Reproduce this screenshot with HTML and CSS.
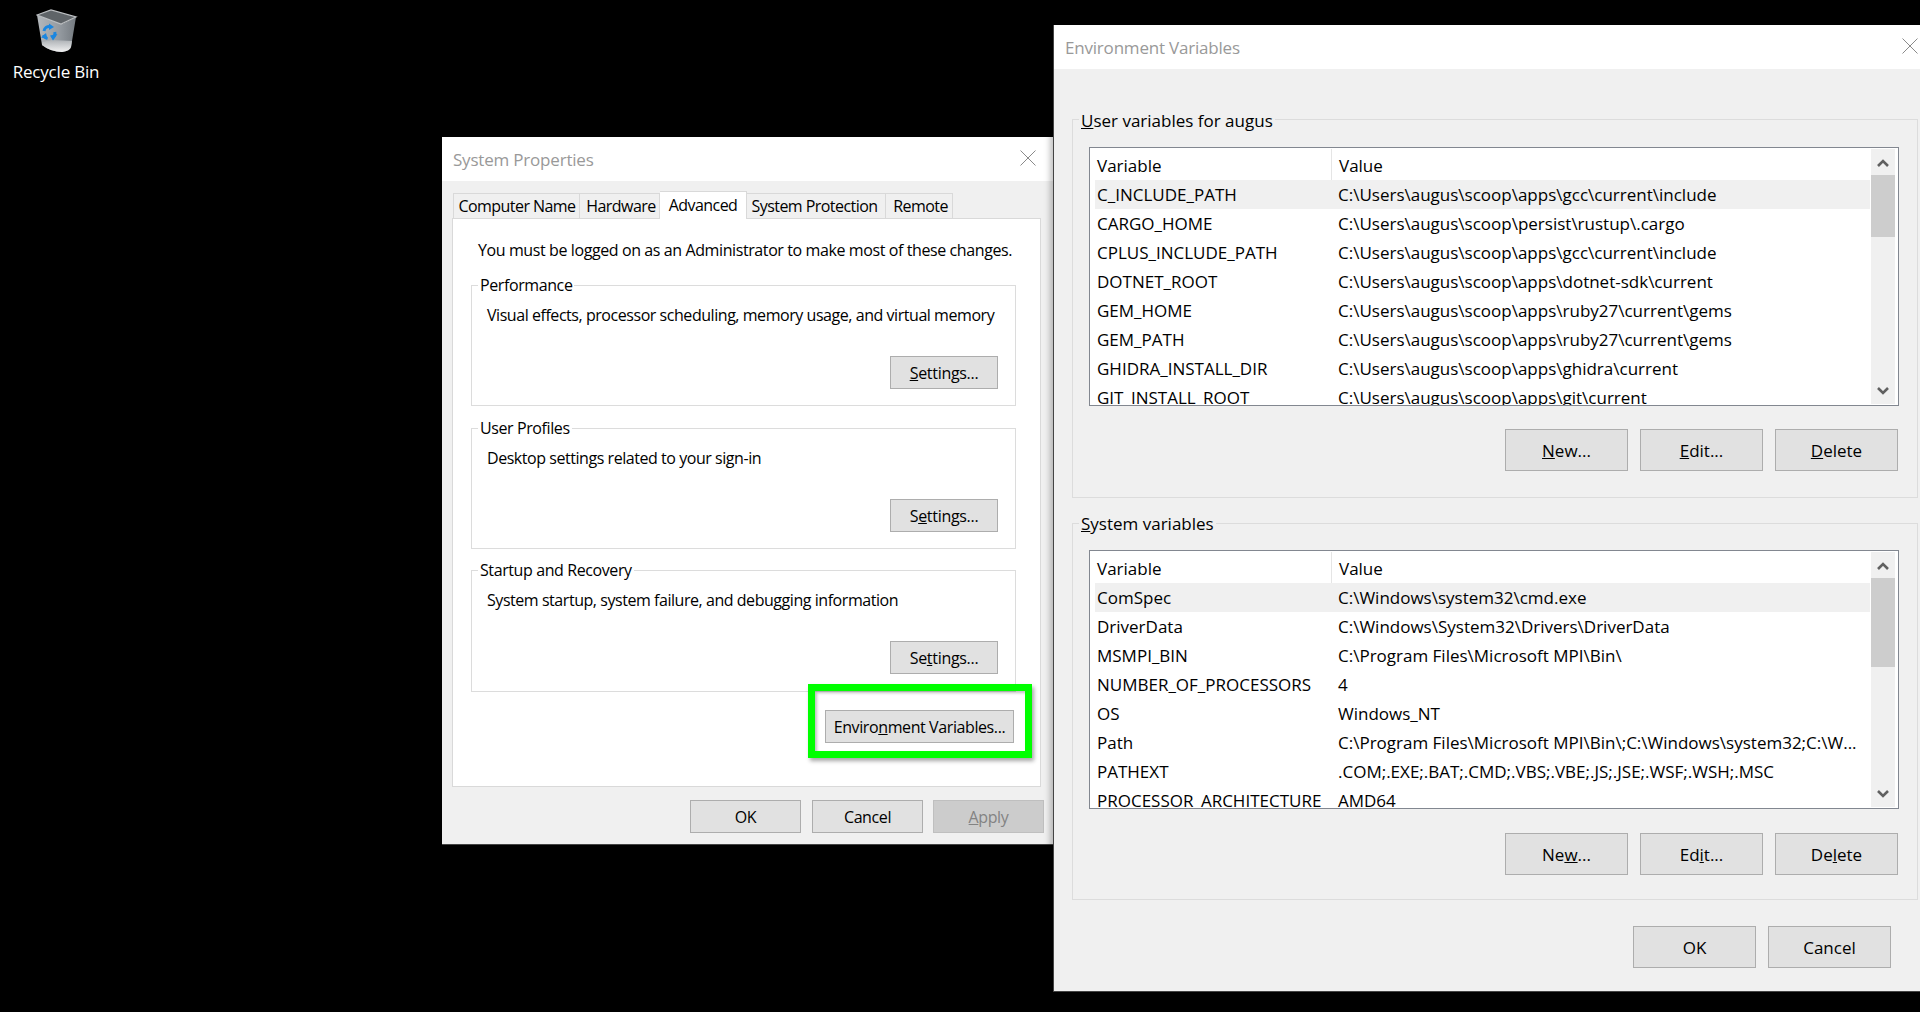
FILE: index.html
```html
<!DOCTYPE html>
<html lang="en">
<head>
<meta charset="utf-8">
<title>Environment Variables</title>
<link rel="stylesheet" href="styles.css">
</head>
<body>
<main class="desktop">
  <div class="desk-icon">
    <svg class="bin" viewBox="0 0 44 48" width="44" height="48">
      <defs>
        <linearGradient id="binBody" x1="0" y1="0" x2="1" y2="0"><stop offset="0" stop-color="#b4b8bc"/><stop offset="0.55" stop-color="#969ca2"/><stop offset="1" stop-color="#747a80"/></linearGradient>
        <linearGradient id="binFloor" x1="0" y1="0" x2="0" y2="1"><stop offset="0" stop-color="#aeb2b6"/><stop offset="1" stop-color="#f2f2f2"/></linearGradient>
      </defs>
      <path d="M1 7 L6 37 Q15 44 26 44 Q34 43 35 39 L40 9 L26 16 Z" fill="url(#binBody)"/>
      <path d="M6 34 L16 32 L36 33 L35 39 Q34 43 26 44 Q15 44 6 37 Z" fill="url(#binFloor)"/>
      <path d="M1 7 L15 2 L40 9 L25 16 Z" fill="#5f6468" stroke="#bcbfc2" stroke-width="1.2"/>
      <g fill="none" stroke="#1a86e0" stroke-width="3">
        <path d="M8 23 A5.5 5.5 0 0 1 14 18.5"/>
        <path d="M18.8 24 A5.5 5.5 0 0 1 16 30"/>
        <path d="M11.5 30.5 A5.5 5.5 0 0 1 7.5 27"/>
      </g>
      <g fill="#1a86e0">
        <path d="M13 15.5 L18 19 L13 22 Z"/>
        <path d="M21.5 26 L17 32.5 L14 27.5 Z"/>
        <path d="M5 29.5 L10 25 L11.5 31 Z"/>
      </g>
    </svg>
    <span class="desk-label">Recycle Bin</span>
  </div>

  <section class="window sysprops">
    <header class="titlebar">
      <span class="title">System Properties</span>
      <svg class="close" viewBox="0 0 16 16" width="16" height="16"><path d="M0.5 0.5 L15.5 15.5 M15.5 0.5 L0.5 15.5"/></svg>
    </header>
    <div class="tabs">
      <span class="tab t1">Computer Name</span>
      <span class="tab t2">Hardware</span>
      <span class="tab t3 active">Advanced</span>
      <span class="tab t4">System Protection</span>
      <span class="tab t5">Remote</span>
    </div>
    <div class="panel">
      <p class="note">You must be logged on as an Administrator to make most of these changes.</p>
      <fieldset class="sgroup">
        <legend>Performance</legend>
        <p>Visual effects, processor scheduling, memory usage, and virtual memory</p>
        <button class="btn settings" type="button"><u>S</u>ettings...</button>
      </fieldset>
      <fieldset class="sgroup profiles">
        <legend>User Profiles</legend>
        <p>Desktop settings related to your sign-in</p>
        <button class="btn settings" type="button">S<u>e</u>ttings...</button>
      </fieldset>
      <fieldset class="sgroup recovery">
        <legend>Startup and Recovery</legend>
        <p>System startup, system failure, and debugging information</p>
        <button class="btn settings" type="button">Se<u>t</u>tings...</button>
      </fieldset>
      <div class="env-wrap">
        <button class="btn env-btn" type="button">Enviro<u>n</u>ment Variables...</button>
        <div class="callout"></div>
      </div>
    </div>
    <footer class="sys-footer">
      <button class="btn sys-foot-btn" type="button">OK</button>
      <button class="btn sys-foot-btn" type="button">Cancel</button>
      <button class="btn sys-foot-btn disabled" type="button"><u>A</u>pply</button>
    </footer>
  </section>

  <section class="window envvars">
    <header class="titlebar">
      <span class="title">Environment Variables</span>
      <svg class="close" viewBox="0 0 16 16" width="16" height="16"><path d="M0.5 0.5 L15.5 15.5 M15.5 0.5 L0.5 15.5"/></svg>
    </header>
    <div class="env-body">
      <fieldset class="egroup user">
        <legend><u>U</u>ser variables for augus</legend>
        <div class="list">
          <div class="rows">
            <div class="row head"><span class="k">Variable</span><span class="v">Value</span></div>
            <div class="row sel"><span class="k">C_INCLUDE_PATH</span><span class="v">C:\Users\augus\scoop\apps\gcc\current\include</span></div>
            <div class="row"><span class="k">CARGO_HOME</span><span class="v">C:\Users\augus\scoop\persist\rustup\.cargo</span></div>
            <div class="row"><span class="k">CPLUS_INCLUDE_PATH</span><span class="v">C:\Users\augus\scoop\apps\gcc\current\include</span></div>
            <div class="row"><span class="k">DOTNET_ROOT</span><span class="v">C:\Users\augus\scoop\apps\dotnet-sdk\current</span></div>
            <div class="row"><span class="k">GEM_HOME</span><span class="v">C:\Users\augus\scoop\apps\ruby27\current\gems</span></div>
            <div class="row"><span class="k">GEM_PATH</span><span class="v">C:\Users\augus\scoop\apps\ruby27\current\gems</span></div>
            <div class="row"><span class="k">GHIDRA_INSTALL_DIR</span><span class="v">C:\Users\augus\scoop\apps\ghidra\current</span></div>
            <div class="row"><span class="k">GIT_INSTALL_ROOT</span><span class="v">C:\Users\augus\scoop\apps\git\current</span></div>
          </div>
          <div class="scroll">
            <svg class="arrow up" viewBox="0 0 12 8" width="12" height="8"><path d="M1 7 L6 2 L11 7"/></svg>
            <div class="track"><div class="thumb thumb-user"></div></div>
            <svg class="arrow down" viewBox="0 0 12 8" width="12" height="8"><path d="M1 1 L6 6 L11 1"/></svg>
          </div>
        </div>
        <div class="actions">
          <button class="btn act" type="button"><u>N</u>ew...</button>
          <button class="btn act" type="button"><u>E</u>dit...</button>
          <button class="btn act" type="button"><u>D</u>elete</button>
        </div>
      </fieldset>
      <fieldset class="egroup system">
        <legend><u>S</u>ystem variables</legend>
        <div class="list">
          <div class="rows">
            <div class="row head"><span class="k">Variable</span><span class="v">Value</span></div>
            <div class="row sel"><span class="k">ComSpec</span><span class="v">C:\Windows\system32\cmd.exe</span></div>
            <div class="row"><span class="k">DriverData</span><span class="v">C:\Windows\System32\Drivers\DriverData</span></div>
            <div class="row"><span class="k">MSMPI_BIN</span><span class="v">C:\Program Files\Microsoft MPI\Bin\</span></div>
            <div class="row"><span class="k">NUMBER_OF_PROCESSORS</span><span class="v">4</span></div>
            <div class="row"><span class="k">OS</span><span class="v">Windows_NT</span></div>
            <div class="row"><span class="k">Path</span><span class="v">C:\Program Files\Microsoft MPI\Bin\;C:\Windows\system32;C:\W...</span></div>
            <div class="row"><span class="k">PATHEXT</span><span class="v">.COM;.EXE;.BAT;.CMD;.VBS;.VBE;.JS;.JSE;.WSF;.WSH;.MSC</span></div>
            <div class="row"><span class="k">PROCESSOR_ARCHITECTURE</span><span class="v">AMD64</span></div>
          </div>
          <div class="scroll">
            <svg class="arrow up" viewBox="0 0 12 8" width="12" height="8"><path d="M1 7 L6 2 L11 7"/></svg>
            <div class="track"><div class="thumb thumb-system"></div></div>
            <svg class="arrow down" viewBox="0 0 12 8" width="12" height="8"><path d="M1 1 L6 6 L11 1"/></svg>
          </div>
        </div>
        <div class="actions">
          <button class="btn act" type="button">Ne<u>w</u>...</button>
          <button class="btn act" type="button">Ed<u>i</u>t...</button>
          <button class="btn act" type="button">De<u>l</u>ete</button>
        </div>
      </fieldset>
      <div class="env-footer">
        <button class="btn act" type="button">OK</button>
        <button class="btn act" type="button">Cancel</button>
      </div>
    </div>
  </section>
</main>
</body>
</html>
```
FILE: styles.css
```css
* { box-sizing: border-box; }
html, body { margin: 0; height: 100%; background: #000; }
body { overflow: hidden; font-family: "Open Sans", "Noto Sans", sans-serif; color: #000; }
.desktop { position: relative; width: 1920px; height: 1012px; overflow: hidden; background: #000; }

.desk-icon { position: absolute; left: 0; top: 8px; width: 112px; display: flex; flex-direction: column; align-items: center; }
.bin { margin-left: 3px; }
.desk-label { color: #fff; font-size: 17px; line-height: 22px; margin-top: 5px; letter-spacing: -0.2px; text-shadow: 1px 1px 1px rgba(0,0,0,.8); }

.window { position: absolute; background: #f0f0f0; display: flex; flex-direction: column; }
.sysprops { left: 442px; top: 137px; width: 612px; height: 708px; border-bottom: 1px solid #444; font-size: 16px; letter-spacing: -0.4px; }
.envvars { left: 1053px; top: 25px; width: 867px; height: 967px; border-left: 1px solid #444; border-bottom: 1px solid #444; box-shadow: -3px 0 6px rgba(0,0,0,.25); font-size: 17px; letter-spacing: 0; }

.titlebar { height: 44px; flex: none; background: #fff; display: flex; align-items: center; justify-content: space-between; }
.title { color: #999; font-size: 17px; letter-spacing: -0.2px; }
.sysprops .title { margin-left: 11px; }
.sysprops .close { margin-right: 18px; margin-top: -2px; }
.envvars .title { margin-left: 11px; }
.envvars .close { margin-right: 2px; margin-top: -2px; }
.close path { stroke: #8a8a8a; stroke-width: 1; fill: none; }

.tabs { display: flex; align-items: flex-end; height: 38px; padding-left: 11px; position: relative; z-index: 1; margin-bottom: -1px; letter-spacing: -0.55px; }
.tab { height: 26px; line-height: 25px; text-align: center; background: #f0f0f0; border: 1px solid #d9d9d9; border-left-width: 0; white-space: nowrap; }
.tab.t1 { width: 127px; border-left-width: 1px; padding-left: 1px; }
.tab.t2 { width: 80px; padding-left: 3px; }
.tab.t3 { width: 87px; }
.tab.t4 { width: 139px; padding-right: 3px; }
.tab.t5 { width: 67px; padding-left: 3px; }
.tab.active { height: 28px; line-height: 26px; background: #fff; border-bottom: 0; }

.panel { height: 569px; margin: 0 13px 0 10px; background: #fff; border: 1px solid #d9d9d9; padding: 21px 24px 0 18px; display: flex; flex-direction: column; align-items: stretch; }
.note { margin: 0 0 15px 7px; line-height: 20px; white-space: nowrap; }
.sgroup { margin: 0 0 12px; padding: 10px 17px 0 15px; height: 131px; border: 1px solid #dcdcdc; min-width: 0; display: flex; flex-direction: column; }
.sgroup.profiles { margin-bottom: 11px; }
.sgroup.recovery { height: 132px; }
.sgroup legend { padding: 0 2px; margin-left: -9px; line-height: 20px; height: 20px; }
.sgroup p { margin: 0; line-height: 20px; white-space: nowrap; letter-spacing: -0.45px; }

.btn { display: block; margin: 0; padding: 0; font: inherit; letter-spacing: inherit; color: #000; background: #e1e1e1; border: 1px solid #adadad; text-align: center; white-space: nowrap; }
.settings { align-self: flex-end; width: 108px; height: 33px; margin-top: 31px; letter-spacing: -0.3px; }

.env-wrap { position: relative; align-self: flex-end; margin: 6px 2px 0 0; width: 189px; height: 33px; }
.env-btn { width: 100%; height: 100%; }
.callout { position: absolute; left: -17px; top: -26px; width: 224px; height: 74px; border: 7px solid #00ff00; box-shadow: 2px 3px 4px rgba(0,0,0,.35), inset 2px 2px 3px rgba(0,0,0,.25); pointer-events: none; }

.sys-footer { display: flex; justify-content: flex-end; padding: 13px 10px 0 0; gap: 10px; }
.sys-foot-btn { width: 111px; height: 33px; }
.sys-foot-btn:first-child { margin-right: 1px; }
.sys-foot-btn.disabled { background: #ccc; border-color: #bfbfbf; color: #838383; }

.env-body { padding: 38px 0 0 18px; display: flex; flex-direction: column; }
.egroup { margin: 0; width: 846px; min-width: 0; padding: 16px 18px 0 16px; border: 1px solid #dcdcdc; }
.egroup.user { height: 391px; margin-bottom: 13px; }
.egroup.system { height: 389px; padding-top: 15px; }
.egroup legend { margin-left: -10px; padding: 0 2px; height: 24px; line-height: 27px; }
.egroup.system legend { line-height: 25px; }

.list { height: 259px; border: 1px solid #828790; background: #fff; display: flex; overflow: hidden; padding-left: 5px; }
.rows { flex: 1; min-width: 0; }
.row { display: flex; height: 29px; line-height: 30px; white-space: nowrap; }
.row.head { height: 32px; line-height: 35px; }
.row.sel { background: #f0f0f0; }
.k { width: 236px; padding-left: 2px; flex: none; overflow: hidden; }
.v { padding-left: 7px; }
.head .k { border-right: 1px solid #e5e5e5; width: 237px; margin-top: 1px; line-height: 34px; }
.scroll { flex: none; width: 24px; margin: 1px 3px 1px 1px; background: #f0f0f0; display: flex; flex-direction: column; align-items: center; }
.arrow { flex: none; }
.arrow.up { margin: 10px 0 8px; }
.arrow.down { margin: 8px 0 9px; }
.arrow path { fill: none; stroke: #606060; stroke-width: 2.6; }
.track { flex: 1; width: 100%; }
.thumb { width: 100%; background: #cdcdcd; }
.thumb-user { height: 62px; }
.thumb-system { height: 89px; }

.actions { display: flex; justify-content: flex-end; gap: 12px; margin: 23px 1px 0 0; }
.egroup.system .actions { margin-top: 24px; }
.act { width: 123px; height: 42px; }
.env-footer { display: flex; justify-content: flex-end; gap: 12px; margin-top: 26px; padding-right: 29px; }
```
